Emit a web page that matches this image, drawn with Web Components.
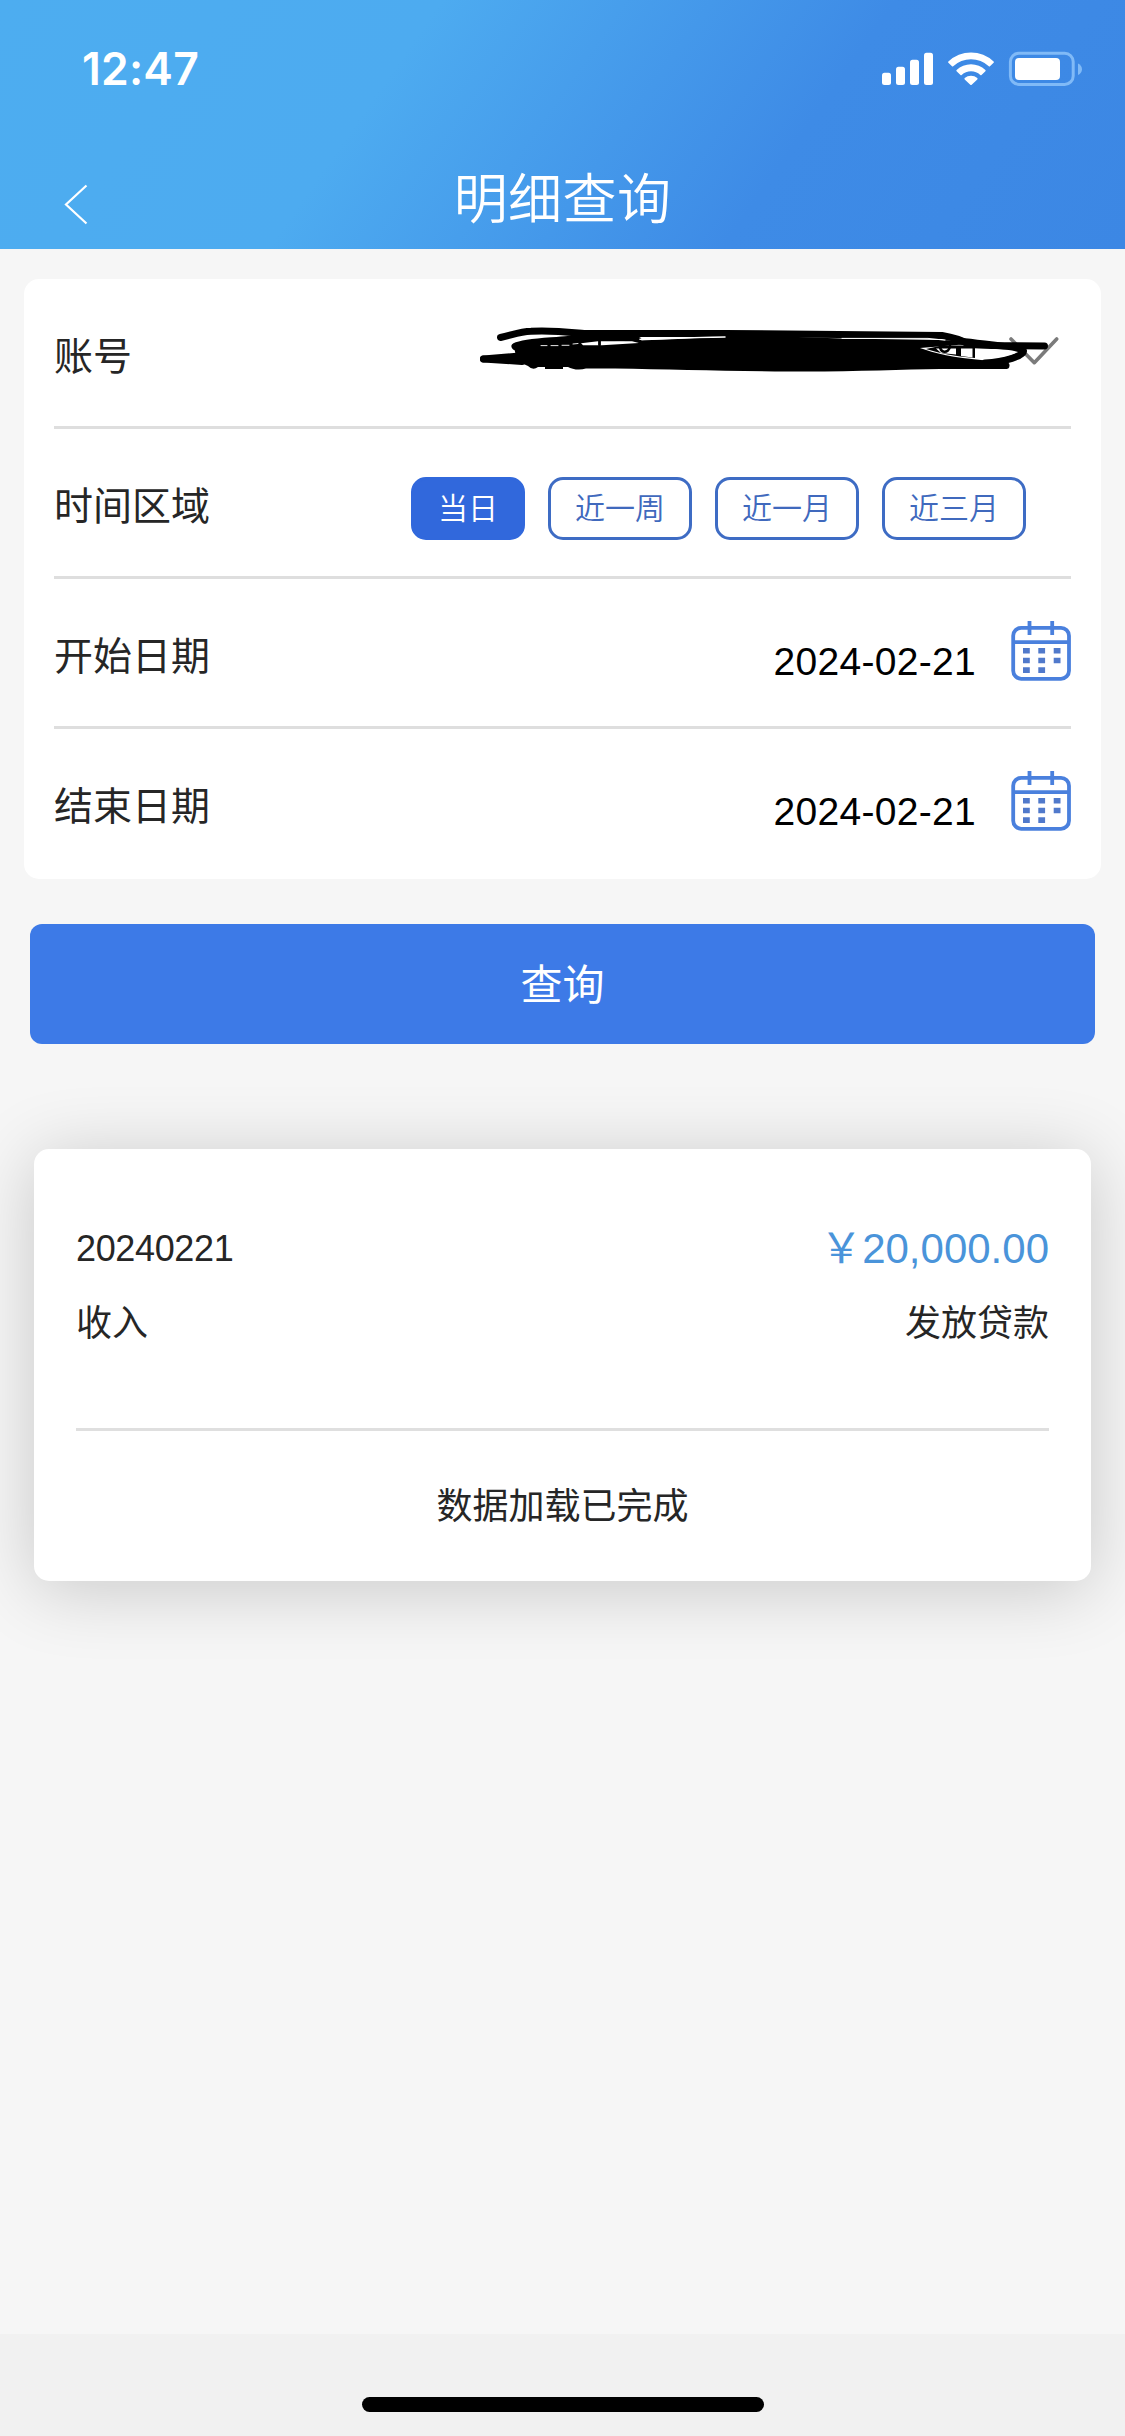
<!DOCTYPE html>
<html lang="zh-CN">
<head>
<meta charset="utf-8">
<meta name="viewport" content="width=device-width">
<title>明细查询</title>
<style>
html,body{margin:0;height:100%}
body{background:#f6f6f6;color:#262626;font-family:"Liberation Sans","Noto Sans CJK SC",sans-serif}
</style>
</head>
<body>
<detail-page></detail-page>
<script>
const define = (name, html) => customElements.define(name, class extends HTMLElement {
  constructor() {
    super();
    const t = document.createElement('template');
    t.innerHTML = html;
    this.attachShadow({ mode: 'open' }).append(t.content.cloneNode(true));
  }
});

define('status-bar', `
<style>
:host{display:flex;justify-content:space-between;height:138px;box-sizing:border-box;padding:0 43px 0 82px;color:#fff}
.time{font:600 44.5px/54px Inter,"Liberation Sans",sans-serif;margin-top:42px;letter-spacing:.2px}
svg{display:block;margin-top:48px}
</style>
<span class="time">12:47</span>
<svg width="202" height="42" viewBox="880 48 202 42" fill="#fff">
  <rect x="882" y="72.7" width="9" height="12.3" rx="2.5"/>
  <rect x="896" y="66.7" width="9" height="18.3" rx="2.5"/>
  <rect x="910" y="59.8" width="9" height="25.2" rx="2.5"/>
  <rect x="924" y="52.8" width="9" height="32.2" rx="2.5"/>
  <path d="M948.4 61.6A32.5 32.5 0 0 1 993.6 61.6Q994.2 62.2 993.6 62.8L990 66.3Q989.4 66.9 988.8 66.3A25.8 25.8 0 0 0 953.2 66.3Q952.6 66.9 952 66.3L948.4 62.8Q947.8 62.2 948.4 61.6Z"/>
  <path d="M956.6 70A20.8 20.8 0 0 1 985.4 70Q986 70.6 985.4 71.2L981.5 75Q980.9 75.6 980.3 75A13.6 13.6 0 0 0 961.7 75Q961.1 75.6 960.5 75L956.6 71.2Q956 70.6 956.6 70Z"/>
  <path d="M964.7 78.1A9.4 9.4 0 0 1 977.3 78.1Q977.9 78.8 977.3 79.4L971.7 84.7Q971 85.4 970.3 84.7L964.7 79.4Q964.1 78.8 964.7 78.1Z"/>
  <rect x="1010.4" y="53.2" width="62.8" height="31.2" rx="8.5" fill="none" stroke="#80baf7" stroke-width="3"/>
  <rect x="1015" y="58" width="45" height="22" rx="4"/>
  <path d="M1078 63.5C1083.3 66 1083.3 72.500 1078 75Z" fill="#80baf7"/>
</svg>`);

define('nav-bar', `
<style>
:host{display:grid;grid-template-columns:160px 1fr 160px;height:111px}
svg{display:block;margin:46px 0 0 63px}
h1{margin:23px 0 0;text-align:center;color:#fff;font-size:54px;line-height:78px;font-weight:350;letter-spacing:.4px}
</style>
<svg width="26" height="42" viewBox="0 0 26 42" fill="none" stroke="#fff" stroke-width="2.2"><path d="M23.500 1.500L3 20.500L23.500 39.500"/></svg>
<h1><slot></slot></h1>`);

define('form-row', `
<style>
:host{display:flex;height:150px;box-sizing:border-box;justify-content:space-between;align-items:center;border-bottom:3px solid #dedede;padding-top:3px}
:host([last]){border-bottom-color:transparent}
.label{font-size:39px;line-height:56px;margin-top:5px}
.field{display:flex;align-items:center}
</style>
<span class="label"><slot name="label"></slot></span>
<div class="field"><slot></slot></div>`);

define('account-select', `
<style>:host{display:block}svg{display:block}</style>
<svg width="611" height="80" viewBox="460 314 611 80" fill="none" stroke-linecap="round" stroke-linejoin="round">
  <path d="M1011 339L1034.300 362.700L1056.700 339" stroke="#7b7b7b" stroke-width="3.600"/>
  <g stroke="#000" stroke-width="7">
    <path d="M500.500 337.500C512 335 520 331.500 531 331.200C552 330 568 332 584 333.500H725L942 335.500C951 337 960 339 968 344C982 346.500 1013 345.500 1044.500 346"/>
    <path d="M515 346.500C525 341.500 548 341.500 568 339.500C594 337 619 335.500 638 340.500"/>
    <path d="M483.500 359L520 356"/><path d="M483.500 359L522 361.500"/>
    <path d="M1006 365.500H965"/>
    <path d="M960 341C989 345 1017 347 1023.500 351C1024 355.500 1005 362 985 363"/>
  </g>
  <path d="M514 347L537 340H600L629 342L645 340C680 338.400 720 337.500 754 335.500L842 338.500L942 340L969 341V344L920 348C933 353 956 358 981 360L1007 362V369H940C900 369.500 850 372 788 371.500C725 371 670 369.500 615 368.500H586C580 370.500 572 369.500 568 367H563V369H545V367H538Q533 371 528 366L517 361Z" fill="#000"/>
  <path d="M926 349L942 345.500H975L975 358C954 356 940 353.500 926 349Z" fill="#000"/>
  <path d="M936 348.500H956V354.500L941 353ZM961 348.500H972.500V357.500L961 356ZM976.500 349.500C990 348.500 1008 349 1018 352C1010 355.500 997 358 986 358.500L976.500 357.500Z" fill="#fff"/>
  <path d="M940 345C939 353.500 949 354 950 346" stroke="#000" stroke-width="2.600"/>
  <path d="M581 343.200L598 341.300H632L639 343L602 345.300H583Z" fill="#fff"/>
  <path d="M599.500 345V341" stroke="#000" stroke-width="2.800"/>
  <path d="M541 345.600H547M551 345.600H558M562 345.300H569M573 344L578 343.500" stroke="#fff" stroke-width=".9"/>
  <path d="M640 339.300L645 339.500C680 338 705 337 725 337" stroke="#fff" stroke-width="1.500"/>
  <path d="M842 338.400H928L945 340.200" stroke="#fff" stroke-width="1"/>
</svg>`);

define('range-chip', `
<style>
:host{display:block;box-sizing:border-box;height:63px;padding:0 24px;border:3px solid #3e6cc4;border-radius:15px;color:#4069bd;font-size:30px;line-height:58px;font-weight:350}
:host([active]){background:#3168dc;border-color:#3168dc;color:#fff}
</style><slot></slot>`);

define('chip-group', `
<style>:host{display:flex;gap:23px;margin:8px 45px 0 0}</style><slot></slot>`);

define('date-field', `
<style>
:host{display:flex;align-items:flex-start;gap:35px;height:66px;color:#000}
span{font-size:39px;line-height:44px;margin-top:19px;letter-spacing:.3px}
svg{display:block}
</style>
<span><slot></slot></span>
<svg width="60" height="60" viewBox="0 0 60 60" fill="none" stroke="#4a80dd" stroke-width="3.800">
  <rect x="2.200" y="6.800" width="55.800" height="51" rx="8"/>
  <path d="M2 21.200H58M18.500 0V14M41.200 0V14"/>
  <g fill="#5079cb" stroke="none">
    <path d="M12 27h6.800v5.600H12zM27.300 27h6.800v5.600h-6.800zM42.700 27h6.800v5.600h-6.800zM12 36.700h6.800v5.600H12zM27.300 36.700h6.800v5.600h-6.800zM42.700 36.700h6.800v5.600h-6.800zM12 46.300h6.800v5.600H12zM27.300 46.300h6.800v5.600h-6.800z"/>
  </g>
</svg>`);

define('query-form', `
<style>:host{display:block;margin:30px 24px 0;padding:0 30px;background:#fff;border-radius:15px}</style><slot></slot>`);

define('query-button', `
<style>
:host{display:block;margin:45px 30px 0}
button{display:block;width:100%;height:120px;border:0;border-radius:12px;padding:0 0 6px;background:#3d7ae7;color:#fff;font:inherit;font-size:42px}
</style><button><slot></slot></button>`);

define('record-item', `
<style>
:host{display:block;height:282px;box-sizing:border-box;padding-top:64px;border-bottom:3px solid #dfdfdf;font-size:36px}
div{display:flex;justify-content:space-between;align-items:center;height:72px}
div+div{height:70px}
.date{letter-spacing:-.35px}
.amt{font-size:42px;color:#4a94da;margin-top:-9px}
</style>
<div><span class="date"><slot name="date"></slot></span><span class="amt"><slot name="amount"></slot></span></div>
<div><slot name="type"></slot><slot name="memo"></slot></div>`);

define('record-list', `
<style>
:host{display:block;box-sizing:border-box;height:432px;margin:105px 34px 0;padding:0 42px;background:#fff;border-radius:15px;box-shadow:0 8px 72px rgba(0,0,0,.19)}
p{margin:0;text-align:center;font-size:36px;line-height:152px}
</style><slot></slot><p><slot name="footer"></slot></p>`);

define('home-indicator', `
<style>
:host{display:flex;justify-content:center;height:102px;background:#f1f1f1}
i{width:402px;height:15px;margin-top:63px;border-radius:8px;background:#000}
</style><i></i>`);

define('detail-page', `
<style>
:host{display:flex;flex-direction:column;width:1125px;height:2436px;overflow:hidden;background:#f6f6f6}
header{height:249px;background:linear-gradient(125deg,#4dadf0 0,#4dabf0 34%,#3e8be6 69%,#3c87e4 100%)}
main{flex:1}
</style>
<header><status-bar></status-bar><nav-bar>明细查询</nav-bar></header>
<main>
  <query-form>
    <form-row><span slot="label">账号</span><account-select></account-select></form-row>
    <form-row><span slot="label">时间区域</span>
      <chip-group><range-chip active>当日</range-chip><range-chip>近一周</range-chip><range-chip>近一月</range-chip><range-chip>近三月</range-chip></chip-group>
    </form-row>
    <form-row><span slot="label">开始日期</span><date-field>2024-02-21</date-field></form-row>
    <form-row last><span slot="label">结束日期</span><date-field>2024-02-21</date-field></form-row>
  </query-form>
  <query-button>查询</query-button>
  <record-list>
    <record-item>
      <span slot="date">20240221</span><span slot="amount">￥20,000.00</span>
      <span slot="type">收入</span><span slot="memo">发放贷款</span>
    </record-item>
    <span slot="footer">数据加载已完成</span>
  </record-list>
</main>
<home-indicator></home-indicator>`);
</script>
</body>
</html>
